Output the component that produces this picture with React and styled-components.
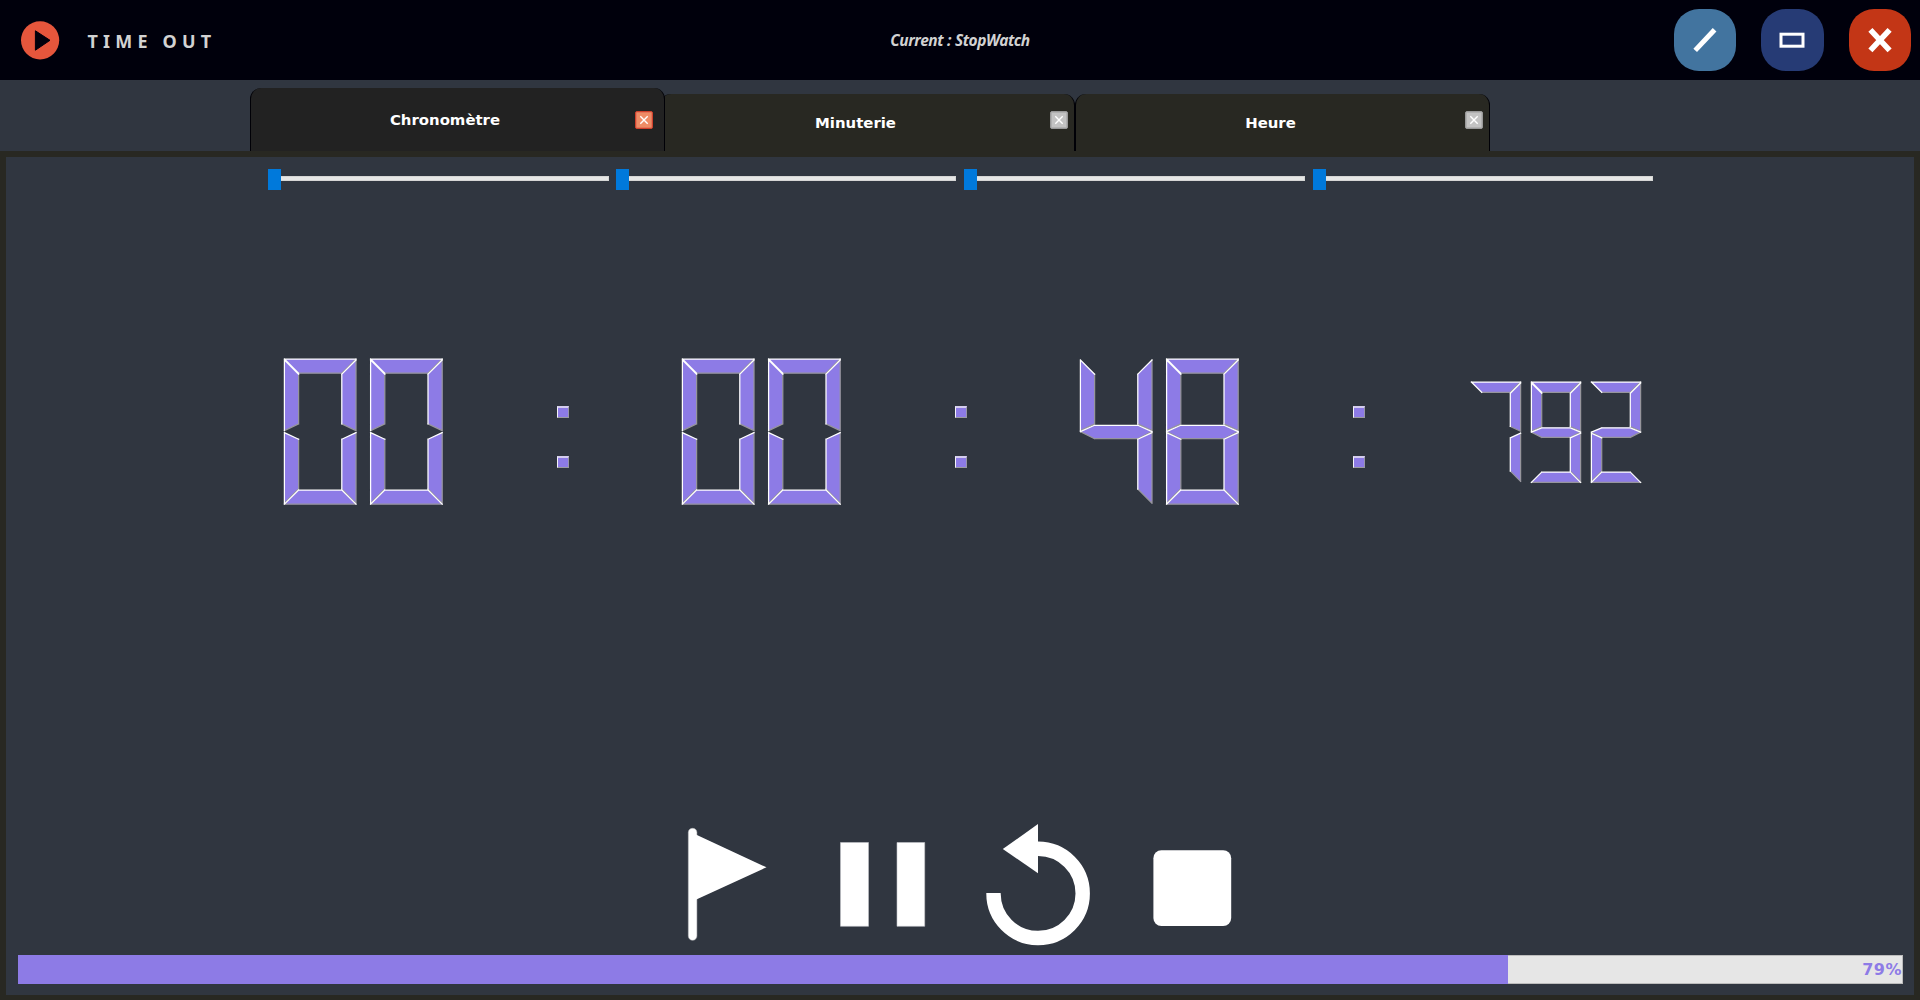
import React from "react";
import styled, { createGlobalStyle } from "styled-components";

const GlobalStyle = createGlobalStyle`
  * { box-sizing: border-box; }
  body { margin: 0; background: #303640; overflow: hidden; }
`;

const Window = styled.div`
  width: 1920px;
  height: 1000px;
  display: flex;
  flex-direction: column;
  background: #303640;
  font-family: "DejaVu Sans", sans-serif;
`;

const TitleBar = styled.header`
  height: 80px;
  flex: none;
  display: grid;
  grid-template-columns: 1fr auto 1fr;
  align-items: center;
  padding: 0 9px 0 21px;
  background: #00000c;
  color: #d2d2d2;
`;

const Brand = styled.div`
  display: flex;
  align-items: center;
  gap: 27.5px;
`;

const AppName = styled.h1`
  margin: 1px 0 0;
  font: 700 18px/24px "Noto Sans", sans-serif;
  letter-spacing: 5.2px;
`;

const CurrentMode = styled.div`
  margin-right: 12px;
  font: italic 700 15.5px/20px "Open Sans", "Noto Sans", sans-serif;
  letter-spacing: -0.5px;
  word-spacing: 0.5px;
`;

const WindowButtons = styled.div`
  display: flex;
  justify-content: flex-end;
  gap: 25.3px;
`;

const WindowButton = styled.button`
  width: 62.2px;
  height: 62.2px;
  padding: 0;
  border: 0;
  border-radius: 25px;
  background: ${(p) => p.$color};
  display: grid;
  place-items: center;
`;

const TabBar = styled.nav`
  height: 71px;
  flex: none;
  display: flex;
  align-items: flex-end;
  padding-left: 250px;
`;

const Tab = styled.div`
  position: relative;
  z-index: ${(p) => (p.$active ? 1 : 0)};
  width: 415px;
  height: ${(p) => (p.$active ? 63 : 57)}px;
  margin-right: ${(p) => (p.$active ? -5 : 0)}px;
  padding: ${(p) => (p.$active ? "23px 11px 0 0" : "14px 6px 0 0")};
  display: flex;
  align-items: flex-start;
  border: solid #000006;
  border-width: 0 1px;
  border-radius: 11px 11px 0 0;
  background: ${(p) => (p.$active ? "#222222" : "#282822")};
`;

const TabLabel = styled.span`
  flex: 1;
  padding-left: ${(p) => (p.$active ? 4 : 0)}px;
  margin-top: ${(p) => (p.$active ? 0 : 6)}px;
  text-align: center;
  color: #fff;
  font-weight: 700;
  font-size: 14.9px;
  line-height: 18px;
`;

const CloseTab = styled.button`
  width: 18px;
  height: 18px;
  margin-top: ${(p) => (p.$active ? 0 : 3)}px;
  padding: 0;
  border: 1px solid ${(p) => (p.$active ? "#d0412c" : "#999999")};
  border-radius: 2px;
  background: ${(p) => (p.$active ? "#ee8c66" : "#c3c3c3")};
  box-shadow: inset 0 0 0 1px ${(p) => (p.$active ? "#e4775a" : "#b0b0b0")};
  display: grid;
  place-items: center;
`;

const Pane = styled.main`
  flex: 1;
  display: flex;
  flex-direction: column;
  border: 6px solid #282822;
  border-bottom-width: 5px;
  padding: 12px 11px 11px 12px;
`;

const Sliders = styled.div`
  display: grid;
  grid-template-columns: 348px 348px 349px 340px;
  padding-left: 250px;
`;

const Slider = styled.div`
  width: ${(p) => p.$width}px;
  height: 21px;
  display: flex;
`;

const Handle = styled.div`
  width: 13px;
  height: 21px;
  background: #0079db;
`;

const Groove = styled.div`
  flex: 1;
  height: 5px;
  margin-top: 7px;
  background: #e6e7e6;
  border: 1px solid #d5d6d5;
  border-left: 0;
`;

const Clock = styled.section`
  display: flex;
  align-items: flex-start;
  gap: 112.6px;
  margin-top: 169px;
  padding-left: 265.5px;
`;

const LcdSvg = styled.svg`
  display: block;
  flex: none;
  overflow: visible;
  margin-top: ${(p) => (p.$small ? 22.8 : 0.4)}px;
  margin-left: ${(p) => (p.$small ? -7 : 0)}px;
`;

const Colon = styled.div`
  flex: none;
  width: 12px;
  margin-top: 47px;
  display: flex;
  flex-direction: column;
  gap: 38px;
`;

const Dot = styled.div`
  width: 12px;
  height: 12px;
  background: #8d7be6;
  border-style: solid;
  border-width: 2px 1px 1px 1px;
  border-color: #d4cdee #9795a8 #9b9b9f #f4f3fa;
`;

const Controls = styled.section`
  display: flex;
  align-items: flex-start;
  margin-top: auto;
  padding-left: 670px;
`;

const ControlButton = styled.button`
  padding: ${(p) => p.$top}px 0 0;
  margin-right: ${(p) => p.$gap}px;
  border: 0;
  background: none;
  svg { display: block; overflow: visible; }
`;

const Progress = styled.div`
  height: 29px;
  flex: none;
  margin-top: 9px;
  display: flex;
  justify-content: space-between;
  align-items: stretch;
  background: #e6e6e6;
  box-shadow: inset 0 0 0 1px #bcbcbc;
`;

const Chunk = styled.div`
  background: #8d7be6;
`;

const Percent = styled.span`
  padding-right: 1px;
  color: #8d7be6;
  font-weight: 700;
  font-size: 16px;
  letter-spacing: 0.5px;
  line-height: 29px;
`;

const PATTERNS = {
  0: "012456", 2: "02346", 4: "1235", 7: "025", 8: "0123456", 9: "012356",
};

// Outline of one bevelled segment; every edge carries true when it is lit.
function segment(id, len, w) {
  const h = w / 2;
  const m = len;
  const r = len - 1;
  return {
    0: [[0, 0], [r, 0, true], [r - w, w], [w, w], [0, 0, true]],
    1: [[0, 1], [w, w + 1, true], [w, m - h - 0.6], [0, m - 1], [0, 1, true]],
    2: [[r, 1], [r, m - 1], [r - w, m - h - 0.6], [r - w, w + 1, true], [r, 1, true]],
    3: [[0, m], [w, m - h + 0.8, true], [r - w, m - h + 0.8, true], [r, m, true], [r - w, m + h], [w, m + h], [0, m]],
    4: [[0, m + 1], [w, m + h + 0.5, true], [w, 2 * m - w - 1], [0, 2 * m - 1], [0, m + 1, true]],
    5: [[r, m + 1], [r, 2 * m - 1], [r - w, 2 * m - w - 1], [r - w, m + h + 0.5, true], [r, m + 1, true]],
    6: [[0, 2 * m], [w, 2 * m - w, true], [r - w, 2 * m - w, true], [r, 2 * m, true], [0, 2 * m]],
  }[id];
}

function Digit({ value, x, len, w }) {
  const segments = [...PATTERNS[value]].map((id) => segment(id, len, w));
  const edges = (lit) =>
    segments
      .flatMap((pts) =>
        pts.slice(1).map((p, i) =>
          Boolean(p[2]) === lit ? `M${pts[i][0]} ${pts[i][1]}L${p[0]} ${p[1]}` : ""
        )
      )
      .join("");
  return (
    <g transform={`translate(${x} 0)`} strokeWidth="1.25" strokeLinecap="square">
      {segments.map((pts, i) => (
        <polygon key={i} points={pts.map((p) => `${p[0]},${p[1]}`).join(" ")} fill="#8d7be6" />
      ))}
      <path d={edges(false)} stroke="#96959c" fill="none" />
      <path d={edges(true)} stroke="#ffffff" fill="none" />
    </g>
  );
}

function Lcd({ value, small }) {
  const len = small ? 50.2 : 72.6;
  const w = small ? 10.3 : 14.2;
  const pitch = small ? 60 : 86.2;
  return (
    <LcdSvg $small={small} width={small ? 171 : 161} height={len * 2} fill="none">
      {[...value].map((d, i) => (
        <Digit key={i} value={d} x={0.4 + i * pitch} len={len} w={w} />
      ))}
    </LcdSvg>
  );
}

const Separator = () => (
  <Colon>
    <Dot />
    <Dot />
  </Colon>
);

const TABS = ["Chronomètre", "Minuterie", "Heure"];
const SLIDER_WIDTHS = [341, 340, 341, 340];

export default function App() {
  const progress = 79;
  return (
    <Window>
      <GlobalStyle />
      <TitleBar>
        <Brand>
          <svg width="39" height="39" viewBox="0 0 39 39">
            <circle cx="19.1" cy="19.3" r="19.1" fill="#e5563c" />
            <path d="M14.4 9.8L29 19.3L14.4 29.2Z" fill="#00000c" stroke="#00000c" strokeLinejoin="round" />
          </svg>
          <AppName>TIME OUT</AppName>
        </Brand>
        <CurrentMode>Current : StopWatch</CurrentMode>
        <WindowButtons>
          <WindowButton $color="#42749f" aria-label="Minimize">
            <svg width="30" height="30" viewBox="0 0 30 30">
              <path d="M5.2 25.4L24.6 4.8" stroke="#fff" strokeWidth="5" />
            </svg>
          </WindowButton>
          <WindowButton $color="#263b75" aria-label="Maximize">
            <svg width="30" height="30" viewBox="0 0 30 30">
              <rect x="4" y="9.2" width="22" height="12" fill="none" stroke="#fff" strokeWidth="3" />
            </svg>
          </WindowButton>
          <WindowButton $color="#c33616" aria-label="Close">
            <svg width="30" height="30" viewBox="0 0 30 30">
              <path d="M5.4 4.8L24.6 25.4M24.6 4.8L5.4 25.4" stroke="#fff" strokeWidth="5.6" />
            </svg>
          </WindowButton>
        </WindowButtons>
      </TitleBar>
      <TabBar>
        {TABS.map((name, i) => (
          <Tab key={name} $active={i === 0}>
            <TabLabel $active={i === 0}>{name}</TabLabel>
            <CloseTab $active={i === 0} aria-label="Close tab">
              <svg width="16" height="16" viewBox="0 0 16 16">
                <path d="M4.3 4.3L11.7 11.7M11.7 4.3L4.3 11.7" stroke="#fff" strokeWidth="1.4" />
              </svg>
            </CloseTab>
          </Tab>
        ))}
      </TabBar>
      <Pane>
        <Sliders>
          {SLIDER_WIDTHS.map((width, i) => (
            <Slider key={i} $width={width}>
              <Handle />
              <Groove />
            </Slider>
          ))}
        </Sliders>
        <Clock>
          <Lcd value="00" />
          <Separator />
          <Lcd value="00" />
          <Separator />
          <Lcd value="48" />
          <Separator />
          <Lcd value="792" small />
        </Clock>
        <Controls>
          <ControlButton $top={4.5} $gap={73} aria-label="Lap">
            <svg width="79" height="113" viewBox="0 0 79 113">
              <rect x="0.3" y="0.3" width="8.6" height="112" rx="4.2" fill="#fff" stroke="#b9babd" strokeWidth="0.5" />
              <path d="M5 5L8.9 7L78.5 39.3L8.9 71.3L5 73Z" fill="#fff" />
            </svg>
          </ControlButton>
          <ControlButton $top={18.5} $gap={61} aria-label="Pause">
            <svg width="85" height="85" viewBox="0 0 85 85">
              <path d="M0.5 0.5H28.5V84.3H0.5ZM57 0.5H84.7V84.3H57Z" fill="#fff" stroke="#c5c6c9" strokeWidth="0.6" />
            </svg>
          </ControlButton>
          <ControlButton $top={0.5} $gap={63} aria-label="Reset">
            <svg width="104" height="122" viewBox="0 0 104 122">
              <path d="M7.5 69A44.6 44.6 0 1 0 52 24.8" fill="none" stroke="#fff" strokeWidth="14.4" />
              <path d="M52 0L16.8 25L52 49.2Z" fill="#fff" />
            </svg>
          </ControlButton>
          <ControlButton $top={26} $gap={0} aria-label="Stop">
            <svg width="79" height="76" viewBox="0 0 79 76">
              <rect x="0.4" y="0.2" width="77.8" height="75.8" rx="8" fill="#fff" />
            </svg>
          </ControlButton>
        </Controls>
        <Progress>
          <Chunk style={{ width: `${progress + 0.05}%` }} />
          <Percent>{progress}%</Percent>
        </Progress>
      </Pane>
    </Window>
  );
}
